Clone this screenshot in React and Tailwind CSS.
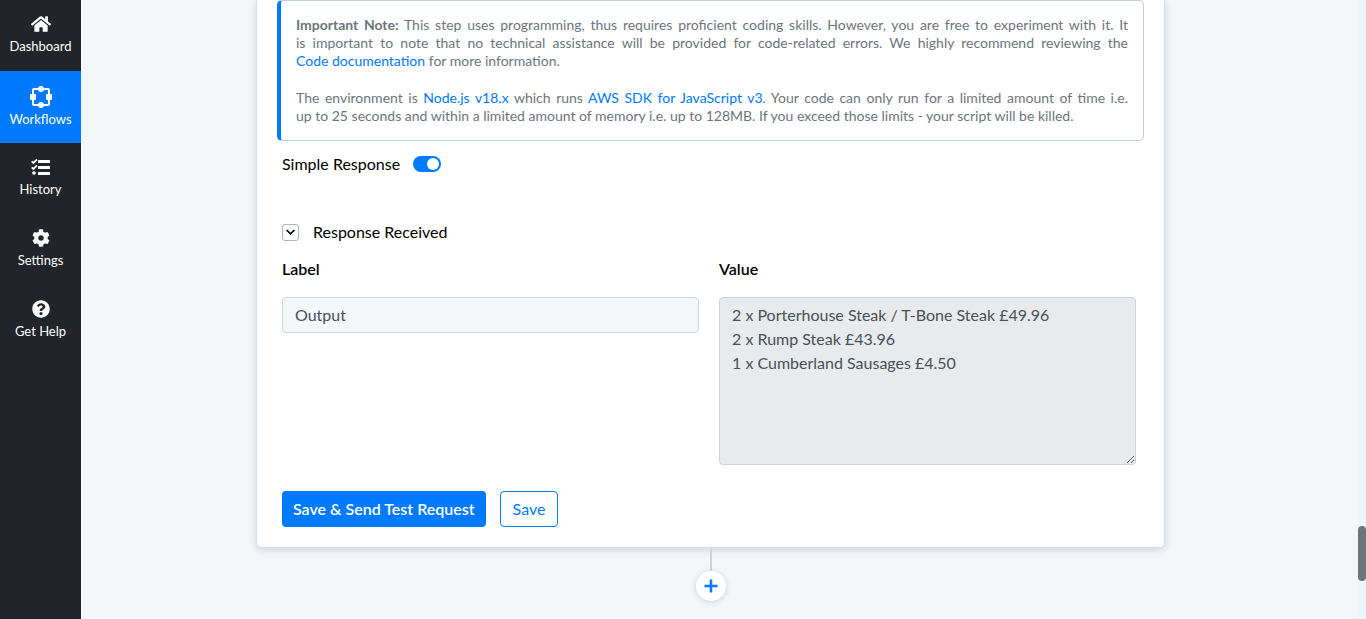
import { useState } from "react";
import { FaHome, FaCog, FaQuestionCircle } from "react-icons/fa";

function WorkflowIcon() {
  return (
    <svg viewBox="0 0 22 22" className="h-[22px] w-[22px]" fill="none" aria-hidden="true">
      <rect x="3" y="3" width="16" height="16" rx="1" stroke="currentColor" strokeWidth="2" />
      <circle cx="11" cy="3" r="3" fill="currentColor" />
      <circle cx="11" cy="19" r="3" fill="currentColor" />
      <rect x="0" y="8" width="6" height="6" rx="1" fill="currentColor" />
      <rect x="16" y="8" width="6" height="6" rx="1" fill="currentColor" />
    </svg>
  );
}

function ChecklistIcon() {
  return (
    <svg viewBox="0 0 19 18" className="h-[18px] w-[19px]" fill="none" aria-hidden="true">
      <path d="M0.700 3.300l1.700 1.700L6 1.300M0.700 9.300l1.700 1.700L6 7.300" stroke="currentColor" strokeWidth="1.800" />
      <circle cx="3" cy="15" r="1.800" fill="currentColor" />
      <rect x="7" y="2" width="12" height="3" rx="0.600" fill="currentColor" />
      <rect x="7" y="8" width="12" height="3" rx="0.600" fill="currentColor" />
      <rect x="7" y="14" width="12" height="3" rx="0.600" fill="currentColor" />
    </svg>
  );
}

const navItems = [
  { label: "Dashboard", icon: <FaHome className="h-5 w-5" /> },
  { label: "Workflows", icon: <WorkflowIcon />, active: true },
  { label: "History", icon: <ChecklistIcon /> },
  { label: "Settings", icon: <FaCog className="h-[18px] w-[18px]" /> },
  { label: "Get Help", icon: <FaQuestionCircle className="h-[18px] w-[18px]" /> },
];

function Sidebar() {
  return (
    <nav className="flex w-[81px] shrink-0 flex-col bg-[#212429] text-white">
      {navItems.map((item) => (
        <a
          key={item.label}
          href="#"
          className={
            item.active
              ? "flex h-[72px] flex-col items-center justify-center gap-px bg-[#007bff] pt-1 pb-[3px] text-[13px] leading-5"
              : "flex h-[71px] flex-col items-center justify-center gap-px pb-[3px] text-[13px] leading-5"
          }
        >
          <span className="flex h-[22px] items-center">{item.icon}</span>
          {item.label}
        </a>
      ))}
    </nav>
  );
}

function Note() {
  return (
    <div className="rounded-[5px] border border-l-4 border-[#c5cbdd] border-l-[#007bff] px-[15px] py-[15px] text-justify text-[14px] leading-[18px] text-[#6c757d]">
      <p>
        <strong className="font-bold">Important Note:</strong> This step uses programming, thus requires proficient
        coding skills. However, you are free to experiment with it. It is&nbsp;important to note that no technical
        assistance will be provided for code-related errors. We highly recommend reviewing the{" "}
        <a href="#" className="text-[#007bff]">Code&nbsp;documentation</a> for more information.
      </p>
      <p className="mt-[19px]">
        The environment is <a href="#" className="text-[#007bff]">Node.js v18.x</a> which runs{" "}
        <a href="#" className="text-[#007bff]">AWS SDK for JavaScript v3</a>. Your code can only run for a limited
        amount of time i.e. up&nbsp;to&nbsp;25 seconds and within a limited amount of memory i.e. up to 128MB. If you
        exceed those limits - your script will be killed.
      </p>
    </div>
  );
}

export default function App() {
  const [simple, setSimple] = useState(true);
  return (
    <div className="flex min-h-screen bg-[#f3f7fa] font-['Lato','Liberation_Sans',sans-serif] text-[#212529]">
      <Sidebar />
      <main className="flex grow flex-col items-center pr-[193px] pl-[175px]">
        <section className="w-full rounded-b-[5px] border border-t-0 border-[#cfdffb] bg-white px-5 pb-5 shadow-[0_2px_8px_rgba(0,0,0,0.14)]">
          <Note />
          <div className="pr-2 pl-[5px]">
            <div className="mt-[11px] flex h-6 items-center gap-[13px] text-black">
              <label htmlFor="simple">Simple Response</label>
              <input
                id="simple"
                type="checkbox"
                checked={simple}
                onChange={(e) => setSimple(e.target.checked)}
                className="h-4 w-7 appearance-none rounded-full bg-gray-400 before:mt-0.5 before:ml-0.5 before:block before:h-3 before:w-3 before:rounded-full before:bg-white checked:bg-[#007bff] checked:before:ml-[14px]"
              />
            </div>
            <div className="mt-11 flex h-6 items-center gap-[14px] text-black">
              <button
                type="button"
                aria-label="Toggle response"
                className="flex h-[17px] w-[17px] items-center justify-center rounded-[3px] border border-[#adb5bd]"
              >
                <svg viewBox="0 0 9 6" className="h-1.5 w-[9px]" fill="none" stroke="currentColor" strokeWidth="1.6">
                  <path d="M0.600 1l3.900 3.900L8.400 1" />
                </svg>
              </button>
              <span>Response Received</span>
            </div>
            <div className="mt-[13px] grid grid-cols-2 gap-5">
              <div className="flex flex-col gap-4">
                <label htmlFor="label" className="leading-6 font-semibold text-black">Label</label>
                <input
                  id="label"
                  defaultValue="Output"
                  className="h-9 rounded border border-[#ced4da] bg-[#f3f7fa] px-3 pb-0.5 text-[#495057]"
                />
              </div>
              <div className="flex flex-col gap-4">
                <label htmlFor="value" className="leading-6 font-semibold text-black">Value</label>
                <textarea
                  id="value"
                  readOnly
                  defaultValue={"2 x Porterhouse Steak / T-Bone Steak £49.96\n2 x Rump Steak £43.96\n1 x Cumberland Sausages £4.50"}
                  className="h-42 rounded border border-[#ced4da] bg-[#e8ebee] px-3 py-[5px] leading-6 text-[#495057]"
                />
              </div>
            </div>
            <div className="mt-[26px] flex gap-[14px]">
              <button type="button" className="h-9 rounded bg-[#007bff] px-[11px] font-semibold text-white">
                Save &amp; Send Test Request
              </button>
              <button type="button" className="h-9 rounded border border-[#007bff] px-3 text-[#007bff]">
                Save
              </button>
            </div>
          </div>
        </section>
        <div className="h-[23px] w-0.5 bg-[#ced4da]" />
        <button
          type="button"
          aria-label="Add step"
          className="flex h-[30px] w-[30px] items-center justify-center rounded-full bg-white text-[#007bff] shadow-[0_1px_6px_rgba(0,0,0,0.16)]"
        >
          <svg viewBox="0 0 14 14" className="h-3.5 w-3.5" stroke="currentColor" strokeWidth="2.500">
            <path d="M7 0.500v13M0.500 7h13" />
          </svg>
        </button>
      </main>
      <div className="flex w-2 shrink-0 flex-col bg-[#edf6ff] pt-[526px]" aria-hidden="true">
        <div className="h-[55px] rounded-full bg-[#6c757d]" />
      </div>
    </div>
  );
}
